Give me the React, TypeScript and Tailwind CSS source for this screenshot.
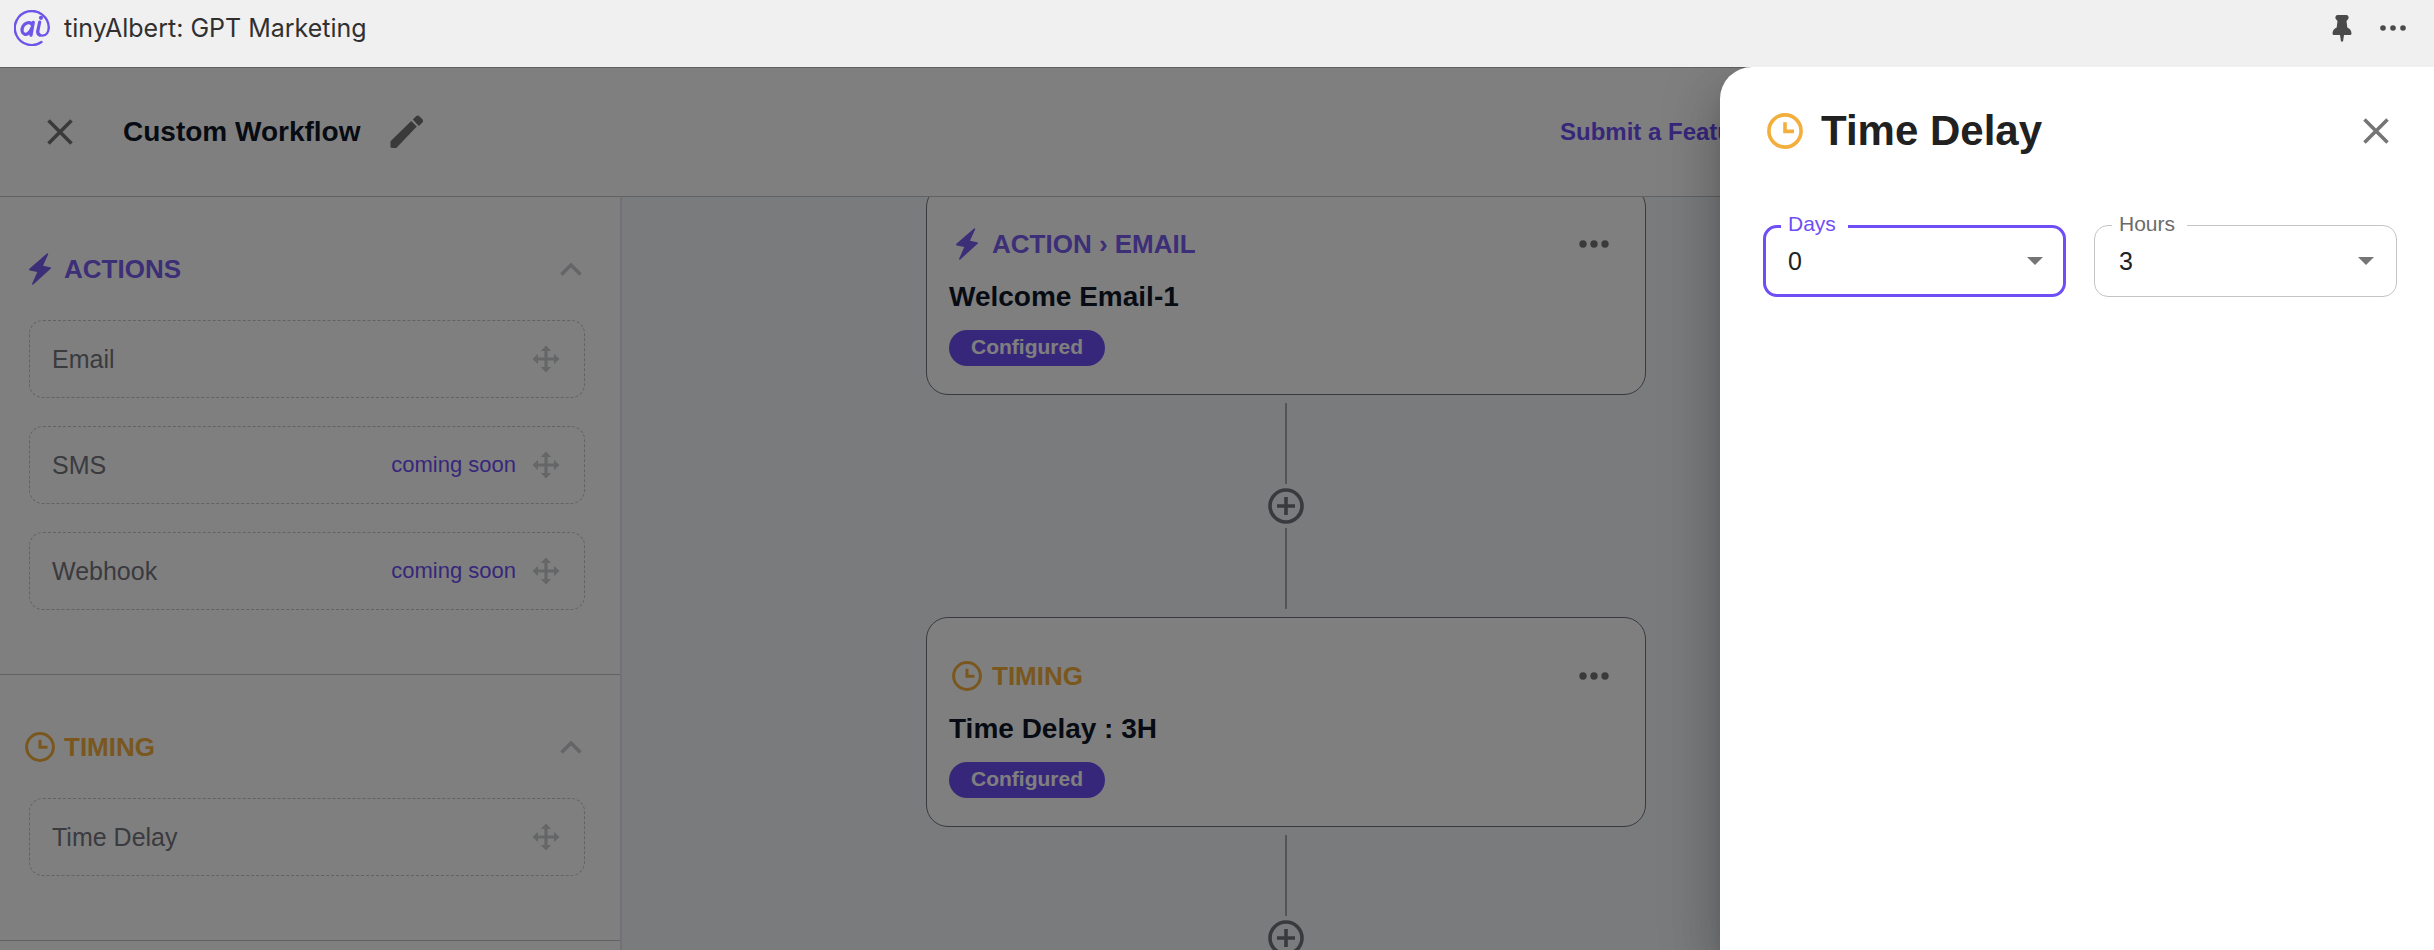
import React, { useState } from 'react';

const archivo = "font-['Liberation_Sans',Arial,sans-serif]";

type IconProps = { className?: string };

function Logo() {
  return (
    <svg viewBox="0 0 36 36" className="w-9 h-9 text-[#6c55e8]" fill="none" stroke="currentColor" strokeLinecap="round" aria-hidden="true">
      <path d="M27.500 32A17 17 0 1 1 34.800 17.500c-.3 4.800-2.400 8-6.300 8.100-3.600.1-5.300-1.800-4.600-5.400" strokeWidth="2.400" />
      <path d="M25.700 12l-1.800 8.500c-.4 2 .2 3.800 1.800 4.500M19.300 12.300l-2.300 12.900M18.500 15.500c-.9-2.500-3.200-3.300-5.600-2.500-3.400 1.100-5.400 5-4.700 8.400.7 3 3.600 3.700 6 2 1.900-1.400 3-3.400 3.700-5.600" strokeWidth="3.200" />
      <circle cx="27" cy="7.800" r="2.100" fill="currentColor" stroke="none" />
    </svg>
  );
}

function PinIcon() {
  return (
    <svg viewBox="0 0 20 28" className="w-5 h-7" fill="currentColor" aria-hidden="true">
      <path d="M6 1h8a2.500 2.500 0 0 1 2 4.200L14.500 7l.8 6.500c2.500 1 4.200 3.200 4.200 6 0 .9-.6 1.500-1.500 1.500h-6l-1 6.500h-2L8 21H2c-.9 0-1.500-.6-1.500-1.500 0-2.800 1.700-5 4.200-6L5.500 7 4 5.200A2.500 2.500 0 0 1 6 1z" />
    </svg>
  );
}

function CloseIcon({ className }: IconProps) {
  return (
    <svg viewBox="0 0 26 26" className={className} fill="none" stroke="currentColor" strokeWidth="3.600" aria-hidden="true">
      <path d="M1.500 1.500l23 23M24.500 1.500l-23 23" />
    </svg>
  );
}

function PencilIcon({ className }: IconProps) {
  return (
    <svg viewBox="0 0 34 34" className={className} fill="currentColor" aria-hidden="true">
      <path d="M.5 26.200 21.200 6l5.600 5.600L6.300 33H2a1.500 1.500 0 0 1-1.500-1.500zM22.800 4.400l3-3a2.800 2.800 0 0 1 3.800 0l2.600 2.600a2.800 2.800 0 0 1 0 3.800l-3.400 3.200z" />
    </svg>
  );
}

function BoltIcon({ className }: IconProps) {
  return (
    <svg viewBox="0 0 22 32" className={className} fill="currentColor" aria-hidden="true">
      <path d="M18 .4.400 15.800c-.6.600-.4 1.400.4 1.600l7.500 1.500-5.200 11.800c-.3.900.5 1.400 1.200.8L21.600 15.700c.6-.6.400-1.400-.4-1.500l-7.200-1.500L19.200 1.300c.3-.9-.5-1.500-1.200-.9z" />
    </svg>
  );
}

function ClockIcon({ className }: IconProps) {
  return (
    <svg viewBox="0 0 30 30" className={className} fill="none" stroke="currentColor" strokeWidth="3" aria-hidden="true">
      <circle cx="15" cy="15" r="13.400" />
      <path d="M15 7.800v7.500h7.500" />
    </svg>
  );
}

function ChevronUpIcon({ className }: IconProps) {
  return (
    <svg viewBox="0 0 22 14" className={className} fill="none" stroke="currentColor" strokeWidth="3.600" aria-hidden="true">
      <path d="M1.500 12.500 11 3l9.500 9.500" />
    </svg>
  );
}

function MoveIcon({ className }: IconProps) {
  return (
    <svg viewBox="0 0 28 28" className={className} fill="currentColor" aria-hidden="true">
      <path d="M14 .5l5.200 5.500h-3.600v6.400H22V8.800L27.500 14 22 19.200v-3.600h-6.400V22h3.600L14 27.500 8.800 22h3.600v-6.400H6v3.600L.5 14 6 8.800v3.600h6.400V6H8.800z" />
    </svg>
  );
}

function DotsIcon({ className }: IconProps) {
  return (
    <svg viewBox="0 0 30 8" className={className} fill="currentColor" aria-hidden="true">
      <circle cx="4" cy="4" r="3.700" />
      <circle cx="15" cy="4" r="3.700" />
      <circle cx="26" cy="4" r="3.700" />
    </svg>
  );
}

function PlusCircleIcon({ className }: IconProps) {
  return (
    <svg viewBox="0 0 36 36" className={className} fill="none" stroke="currentColor" strokeWidth="3.600" aria-hidden="true">
      <circle cx="18" cy="18" r="16" />
      <path d="M18 9v18M9 18h18" />
    </svg>
  );
}

const sections = [
  {
    title: 'ACTIONS',
    color: 'text-[#7b5cf0]',
    icon: <BoltIcon className="w-[22px] h-8" />,
    items: [
      { label: 'Email', soon: false },
      { label: 'SMS', soon: true },
      { label: 'Webhook', soon: true },
    ],
  },
  {
    title: 'TIMING',
    color: 'text-[#f3af3d]',
    icon: <ClockIcon className="w-[30px] h-[30px]" />,
    items: [{ label: 'Time Delay', soon: false }],
  },
];

const steps = [
  {
    kind: 'ACTION › EMAIL',
    name: 'Welcome Email-1',
    color: 'text-[#7b5cf0]',
    icon: <BoltIcon className="w-[22px] h-8" />,
  },
  {
    kind: 'TIMING',
    name: 'Time Delay : 3H',
    color: 'text-[#f3af3d]',
    icon: <ClockIcon className="w-[30px] h-[30px]" />,
  },
];

function Sidebar() {
  return (
    <aside className="w-[622px] shrink-0 bg-white border-r-2 border-[#e2e4ea]">
      {sections.map((section) => (
        <section key={section.title} className="pt-[52px] pb-16 border-b border-[#c4c4c4]">
          <div className="h-10 pl-6 pr-[38px] flex items-center">
            <span className={`w-8 flex justify-center ${section.color}`}>{section.icon}</span>
            <h2 className={`ml-2 text-[26px] leading-8 font-bold ${section.color}`}>{section.title}</h2>
            <button type="button" aria-label={`Collapse ${section.title}`} className="ml-auto text-[#cbcbcf]">
              <ChevronUpIcon className="w-[22px] h-[14px]" />
            </button>
          </div>
          <ul className="mt-[31px] pl-[29px] pr-[35px] flex flex-col gap-7">
            {section.items.map((item) => (
              <li key={item.label} className="h-[78px] pl-[22px] pr-6 flex items-center rounded-[14px] border border-dashed border-[#c4c4c4]">
                <span className="text-[25px] leading-8 text-[#75767f]">{item.label}</span>
                {item.soon && <span className="ml-auto text-[22px] leading-7 text-[#6f4ef6]">coming soon</span>}
                <MoveIcon className={`w-7 h-7 text-[#cbcdd0] ${item.soon ? 'ml-4' : 'ml-auto'}`} />
              </li>
            ))}
          </ul>
        </section>
      ))}
    </aside>
  );
}

function Connector() {
  return (
    <div className="py-2 flex flex-col items-center gap-1">
      <span className="w-0.5 h-[81px] bg-[#aaabaf]" />
      <button type="button" aria-label="Add step" className="text-[#73747c]">
        <PlusCircleIcon className="w-9 h-9" />
      </button>
      <span className="w-0.5 h-[81px] bg-[#aaabaf]" />
    </div>
  );
}

function Canvas() {
  return (
    <div className="flex-1 min-w-0 bg-[#f5f7fb] overflow-hidden">
      <div className="-mt-3 flex flex-col items-center">
        {steps.map((step) => (
          <React.Fragment key={step.name}>
            <article className="w-full max-w-[720px] h-[210px] shrink-0 pl-[22px] pr-9 pt-[38px] bg-white rounded-[22px] border border-[#73747c]">
              <div className="h-10 flex items-center">
                <span className={`w-9 flex justify-center ${step.color}`}>{step.icon}</span>
                <h3 className={`ml-[7px] text-[26px] leading-8 font-bold ${step.color}`}>{step.kind}</h3>
                <button type="button" aria-label={`Options for ${step.name}`} className="ml-auto text-[#757575]">
                  <DotsIcon className="w-[30px] h-2" />
                </button>
              </div>
              <p className="mt-[17px] text-[28px] leading-8 font-bold text-[#0f1729]">{step.name}</p>
              <span className="mt-[17px] h-9 px-[22px] pb-0.5 inline-flex items-center rounded-full bg-[#6f4ef6] text-white text-[21px] leading-6 font-bold">
                Configured
              </span>
            </article>
            <Connector />
          </React.Fragment>
        ))}
      </div>
    </div>
  );
}

type FieldProps = {
  id: string;
  label: string;
  value: number;
  max: number;
  active?: boolean;
  onChange: (value: number) => void;
};

function SelectField({ id, label, value, max, active, onChange }: FieldProps) {
  return (
    <div className="relative flex-1">
      <label
        htmlFor={id}
        className={`absolute left-[18px] -top-[13px] pl-[7px] pr-3 bg-white text-[21px] leading-6 ${active ? 'text-[#6f4ef6]' : 'text-[#6b6b6b]'}`}
      >
        {label}
      </label>
      <select
        id={id}
        value={value}
        onChange={(e) => onChange(Number(e.target.value))}
        className={`w-full h-[72px] appearance-none bg-transparent outline-none rounded-[14px] text-[25px] leading-8 text-[#212121] ${
          active ? 'border-[3px] border-[#6f4ef6] px-[22px]' : 'border border-[#c4c4c4] px-6'
        }`}
      >
        {Array.from({ length: max + 1 }, (_, i) => (
          <option key={i} value={i}>{i}</option>
        ))}
      </select>
      <svg viewBox="0 0 16 8" className="absolute right-[23px] top-8 w-4 h-2 text-[#757575] pointer-events-none" fill="currentColor" aria-hidden="true">
        <path d="M0 0h16L8 8z" />
      </svg>
    </div>
  );
}

function DelayDrawer() {
  const [days, setDays] = useState(0);
  const [hours, setHours] = useState(3);

  return (
    <div
      role="dialog"
      aria-labelledby="drawer-title"
      className="absolute inset-y-0 right-0 w-[714px] max-w-full pl-[43px] pr-[37px] pt-9 bg-white rounded-tl-[32px] shadow-[0_16px_20px_-10px_rgba(0,0,0,0.2),0_32px_48px_4px_rgba(0,0,0,0.14),0_12px_60px_10px_rgba(0,0,0,0.12)]"
    >
      <div className="h-14 pl-1 pr-2 flex items-center">
        <ClockIcon className="w-9 h-9 text-[#f3af3d]" />
        <h2 id="drawer-title" className="ml-[18px] text-[42px] leading-[56px] font-bold text-[#212121]">Time Delay</h2>
        <button type="button" aria-label="Close" className="ml-auto text-[#757575]">
          <CloseIcon className="w-[26px] h-[26px]" />
        </button>
      </div>
      <div className="mt-[66px] flex gap-7">
        <SelectField id="days" label="Days" value={days} max={30} active onChange={setDays} />
        <SelectField id="hours" label="Hours" value={hours} max={23} onChange={setHours} />
      </div>
    </div>
  );
}

export default function App() {
  return (
    <div className={`h-screen flex flex-col overflow-hidden bg-white ${archivo}`}>
      <header className="h-[67px] shrink-0 pl-[14px] pr-7 pb-[11px] flex items-center bg-[#f0f0f0]">
        <Logo />
        <h1 className="ml-[14px] font-[Inter,sans-serif] text-[25px] leading-8 text-[#303030]">tinyAlbert: GPT Marketing</h1>
        <div className="ml-auto flex items-center gap-7 text-[#4a4a4a]">
          <button type="button" aria-label="Pin">
            <PinIcon />
          </button>
          <button type="button" aria-label="More">
            <svg viewBox="0 0 26 6" className="w-[26px] h-[6px]" fill="currentColor" aria-hidden="true">
              <circle cx="3" cy="3" r="2.800" />
              <circle cx="13" cy="3" r="2.800" />
              <circle cx="23" cy="3" r="2.800" />
            </svg>
          </button>
        </div>
      </header>

      <main className="relative flex-1 min-h-0 flex flex-col overflow-hidden">
        <div className="h-[130px] shrink-0 pl-[47px] flex items-center bg-white border-y border-[#c4c4c4]">
          <button type="button" aria-label="Close workflow" className="text-[#757575]">
            <CloseIcon className="w-[26px] h-[26px]" />
          </button>
          <p className="ml-[50px] text-[28px] leading-8 font-bold text-[#0f1729]">Custom Workflow</p>
          <button type="button" aria-label="Rename workflow" className="ml-[30px] text-[#757575]">
            <PencilIcon className="w-[34px] h-[34px]" />
          </button>
          <a href="#feature" className="ml-auto w-[874px] text-[24px] leading-8 font-bold text-[#6f4ef6]">Submit a Feature</a>
        </div>
        <div className="flex-1 min-h-0 flex overflow-hidden">
          <Sidebar />
          <Canvas />
          <aside className="w-[484px] shrink-0 bg-white border-l-2 border-[#e2e4ea]" />
        </div>

        {/* Backdrop */}
        <div className="absolute inset-0 bg-black/50" />
        <DelayDrawer />
      </main>
    </div>
  );
}
